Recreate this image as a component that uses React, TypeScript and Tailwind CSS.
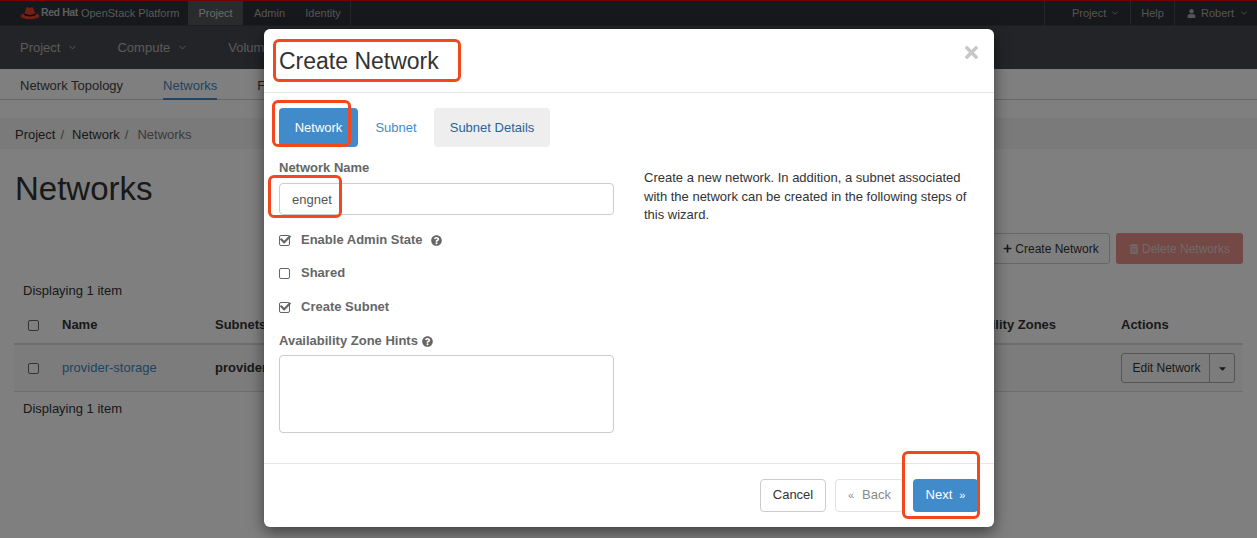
import React from "react";
import { FaPlus, FaTrashAlt, FaQuestionCircle, FaTimes, FaUser, FaCaretDown, FaCheck } from "react-icons/fa";
import { LuChevronDown } from "react-icons/lu";

function Logo() {
  return (
    <svg width="20" height="14" viewBox="0 0 20 14" className="shrink-0">
      <ellipse cx="10" cy="10" rx="9.5" ry="3.2" fill="#e8402a" />
      <path d="M4.6 8 6 2.6C6.3 1.4 7.4 1 8.4 1.4c.8.3 1.6.4 2.4 0 1-.5 2.2-.2 2.6 1L15.4 8c-3.2 1.6-7.6 1.6-10.8 0Z" fill="#e8402a" />
      <path d="M4.4 7.6c3.4 1.8 7.8 1.8 11.2 0l.3 1.4c-3.6 1.9-8.2 1.9-11.8 0Z" fill="#111" />
    </svg>
  );
}

function Box({ checked }: { checked?: boolean }) {
  return (
    <span className="relative block w-[11px] h-[11px] rounded-[2px] border border-[#666] bg-white shrink-0">
      {checked && <FaCheck className="absolute left-[0px] top-[-2px] text-[#666] text-[11px]" />}
    </span>
  );
}

function Annot({ className }: { className: string }) {
  return <div className={"absolute border-[3px] border-[#f4471c] rounded-[6px] " + className} />;
}

export default function App() {
  return (
    <div className="relative w-[1257px] h-[538px] overflow-hidden bg-white text-[13px] text-[#333] font-['Liberation_Sans',Arial,sans-serif]">
      <div className="h-[1px] bg-[#e00]" />
      <div className="h-[25px] bg-[#2d3036] flex items-stretch text-[#aaa] text-[11px] border-b border-[#3a3c40]">
        <div className="w-[188px] pl-[20px] flex items-center gap-[1px] whitespace-nowrap">
          <Logo />
          <span className="font-bold text-[10.5px] text-[#bbb] tracking-[-0.4px]">Red Hat</span>
          <span className="text-[11px] ml-[2px] text-[#b0b0b0]">OpenStack Platform</span>
        </div>
        <div className="w-[55px] bg-[#53565b] flex items-center justify-center text-[#d5d5d5]">Project</div>
        <div className="w-[53px] flex items-center justify-center">Admin</div>
        <div className="w-[55px] flex items-center justify-center border-r border-[#4b4d52]">Identity</div>
        <div className="flex-1" />
        <div className="w-[86px] flex items-center pl-[27px] gap-[4px] border-l border-[#4b4d52]">Project <LuChevronDown size={10} /></div>
        <div className="w-[44px] flex items-center justify-center border-l border-[#4b4d52]">Help</div>
        <div className="w-[83px] flex items-center pl-[12px] gap-[5px] border-l border-[#4b4d52]"><FaUser size={9} /> Robert <LuChevronDown size={10} /></div>
      </div>
      <div className="h-[43px] bg-[#47494e] flex items-center pl-[20px] gap-[39px] text-[#b5b5b5] text-[13px]">
        <span className="flex items-center gap-[7px]">Project <LuChevronDown size={11} /></span>
        <span className="flex items-center gap-[7px]">Compute <LuChevronDown size={11} /></span>
        <span className="ml-[1px]">Volumes</span>
      </div>
      <div className="h-[31px] flex items-stretch pl-[20px] gap-[40px] border-b border-[#ccc]">
        <span className="pt-[7px] text-[#444]">Network Topology</span>
        <span className="pt-[7px] text-[#3f87c0] border-b-2 border-[#3f87c0] h-[31px]">Networks</span>
        <span className="pt-[7px] text-[#444]">Floating IPs</span>
      </div>
      <div className="mt-[18px] h-[31px] bg-[#f5f5f5] pl-[15px] pt-[2px] flex items-center gap-[5px] text-[13px]">
        <span>Project</span><span className="text-[#777]">/</span>
        <span className="ml-[3px]">Network</span><span className="text-[#777]">/</span>
        <span className="ml-[4px] text-[#777]">Networks</span>
      </div>
      <h1 className="ml-[15px] mt-[22px] text-[33px] leading-[36px] text-[#333]">Networks</h1>
      <div className="mt-[26px] pr-[14px] flex justify-end gap-[6px] text-[12px]">
        <div className="h-[31px] w-[122px] pl-[4px] border border-[#ccc] rounded-[3px] bg-white flex items-center justify-center gap-[3px]"><FaPlus size={9} /> Create Network</div>
        <div className="h-[31px] w-[127px] rounded-[3px] bg-[#e8908a] text-[#e0d4d2] flex items-center justify-center gap-[3px]"><FaTrashAlt size={10} /> Delete Networks</div>
      </div>
      <div className="ml-[23px] mt-[19px] leading-[15px]">Displaying 1 item</div>
      <div className="mx-[14px] mt-[9px]">
        <div className="h-[38px] flex items-center border-b-2 border-[#ddd] font-bold">
          <div className="w-[48px] pl-[14px]"><Box /></div>
          <div className="w-[153px]">Name</div>
          <div className="w-[731px]">Subnets Associated</div>
          <div className="w-[175px]">Availability Zones</div>
          <div>Actions</div>
        </div>
        <div className="h-[47px] flex items-center border-b border-[#ddd] bg-[#f9f9f9]">
          <div className="w-[48px] pl-[14px]"><Box /></div>
          <div className="w-[153px] text-[#3f87c0]">provider-storage</div>
          <div className="font-bold">provider-storage-subnet</div>
          <div className="flex-1" />
          <div className="mr-[8px] h-[30px] flex border border-[#aaa] rounded-[3px] text-[12px]">
            <span className="w-[88px] pl-[2px] flex items-center justify-center border-r border-[#aaa]">Edit Network</span>
            <span className="w-[24px] flex items-center justify-center"><FaCaretDown size={11} /></span>
          </div>
        </div>
        <div className="ml-[9px] mt-[9px] leading-[15px]">Displaying 1 item</div>
      </div>

      <div className="absolute inset-0 bg-black/50" />

      <div className="absolute left-[264px] top-[29px] w-[730px] h-[498px] bg-white rounded-[6px] shadow-[0_5px_15px_rgba(0,0,0,0.5)] flex flex-col">
        <div className="h-[64px] px-[15px] flex items-center justify-between border-b border-[#e5e5e5]">
          <h2 className="text-[23px] text-[#333] pt-[2px]">Create Network</h2>
          <FaTimes className="text-[#c8c8c8] text-[19px] mt-[-17px] mr-[-2px]" />
        </div>
        <div className="flex-1 px-[15px] pt-[15px]">
          <div className="flex items-stretch h-[39px]">
            <div className="w-[79px] bg-[#428bca] text-white rounded-[4px] flex items-center justify-center">Network</div>
            <div className="w-[76px] text-[#428bca] flex items-center justify-center">Subnet</div>
            <div className="w-[116px] bg-[#eee] text-[#2a6496] rounded-[4px] flex items-center justify-center">Subnet Details</div>
          </div>
          <div className="flex mt-[13px]">
            <div className="w-[335px] text-[#666] font-bold">
              <div className="leading-[15px]">Network Name</div>
              <div className="mt-[8px] h-[32px] border border-[#ccc] rounded-[4px] pl-[12px] pt-[1px] flex items-center font-normal text-[#555]">engnet</div>
              <div className="mt-[17px] h-[16px] flex items-center"><Box checked /><span className="ml-[11px]">Enable Admin State</span><FaQuestionCircle className="ml-[8px] text-[11px]" /></div>
              <div className="mt-[17px] h-[16px] flex items-center"><Box /><span className="ml-[11px]">Shared</span></div>
              <div className="mt-[18px] h-[16px] flex items-center"><Box checked /><span className="ml-[11px]">Create Subnet</span></div>
              <div className="mt-[18px] h-[16px] flex items-center">Availability Zone Hints<FaQuestionCircle className="ml-[4px] text-[11px]" /></div>
              <div className="mt-[6px] h-[78px] border border-[#ccc] rounded-[4px]" />
            </div>
            <div className="ml-[30px] w-[330px] mt-[9px] leading-[18.6px] text-[#333] text-[13px]">
              Create a new network. In addition, a subnet associated with the network can be created in the following steps of this wizard.
            </div>
          </div>
        </div>
        <div className="h-[64px] border-t border-[#e5e5e5] flex items-center justify-end pr-[16px] gap-[9px] pb-[1px]">
          <div className="w-[66px] h-[33px] border border-[#ccc] rounded-[4px] flex items-center justify-center">Cancel</div>
          <div className="w-[69px] h-[33px] border border-[#e2e2e2] rounded-[4px] flex items-center justify-center gap-[8px] text-[#8a8a8a]"><span className="text-[11px]">«</span>Back</div>
          <div className="w-[65px] h-[33px] bg-[#428bca] text-white rounded-[4px] flex items-center justify-center gap-[7px]">Next<span className="text-[11px]">»</span></div>
        </div>
      </div>

      <Annot className="left-[273px] top-[39px] w-[188px] h-[43px]" />
      <Annot className="left-[272px] top-[100px] w-[79px] h-[47px]" />
      <Annot className="left-[268px] top-[175px] w-[74px] h-[43px]" />
      <Annot className="left-[902px] top-[451px] w-[78px] h-[68px]" />
    </div>
  );
}
